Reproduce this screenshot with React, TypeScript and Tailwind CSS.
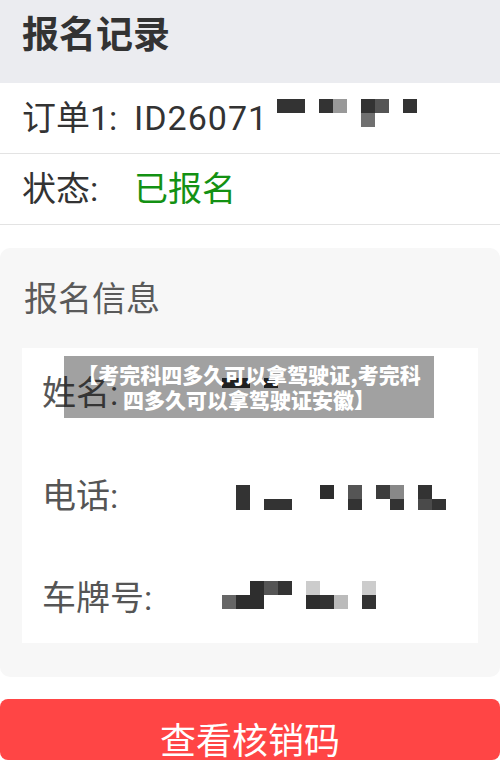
import React from 'react';

// mosaic cells for the blurred values, 14px per column
type MosaicProps = {
  rows: string[][];
  heights: number[];
  className?: string;
};

function Mosaic({ rows, heights, className = '' }: MosaicProps) {
  return (
    <div className={`flex flex-col ${className}`}>
      {rows.map((row, r) => (
        <div key={r} className="flex">
          {row.map((c, i) => (
            <div
              key={i}
              className="w-[14px] shrink-0"
              style={{ height: heights[r], backgroundColor: c || 'transparent' }}
            />
          ))}
        </div>
      ))}
    </div>
  );
}

const orderCells = [
  ['#333', '#333', '', '#333', '#999', '', '#333', '#555', '', '#333'],
  ['', '', '', '', '', '', '#707070', '', '', ''],
];

const nameCells = [['#333', '#333', '', '#333']];

const phoneCells = [
  ['', '#333', '', '', '', '', '', '#2e2e2e', '', '#555', '', '#3c3c3c', '#888', '', '#333', ''],
  ['', '#333', '', '#333', '#333', '', '', '', '', '#333', '', '', '#333', '', '#4a4a4a', '#333'],
];

const plateCells = [
  ['', '', '#2e2e2e', '#555', '#333', '', '#ccc', '', '', '', '#ccc'],
  ['#666', '#2e2e2e', '#2e2e2e', '', '', '', '#2e2e2e', '#333', '#bbb', '', '#333'],
];

export default function App() {
  return (
    <div className="relative w-[500px] h-[775px] bg-white overflow-hidden font-['Roboto','Noto_Sans_CJK_SC','Noto_Sans',sans-serif]">
      {/* header */}
      <div className="h-[83px] bg-[#ebecf0] flex items-center px-[22px]">
        <h1 className="text-[37px] leading-[44px] font-bold text-[#333] -mt-[12px]">报名记录</h1>
      </div>

      {/* order rows */}
      <div className="h-[71px] border-b border-[#e3e3e3] flex px-[22px]">
        <span className="w-[112px] shrink-0 text-[34px] leading-[70px] text-[#333]">订单1:</span>
        <span className="text-[34px] leading-[70px] tracking-[1px] text-[#333]">ID26071</span>
        <Mosaic rows={orderCells} heights={[14, 14]} className="mt-[16px] ml-[9px]" />
      </div>
      <div className="h-[71px] border-b border-[#e3e3e3] flex px-[22px]">
        <span className="w-[112px] shrink-0 text-[34px] leading-[70px] text-[#333]">状态:</span>
        <span className="text-[34px] leading-[70px] text-[#139113]">已报名</span>
      </div>

      {/* info card */}
      <div className="mt-[23px] bg-[#f7f7f7] rounded-[10px] px-[22px] pt-[31px] pb-[34px]">
        <h2 className="pl-[2px] text-[34px] leading-[40px] text-[#5a5a5a]">报名信息</h2>
        <div className="mt-[29px] bg-white px-[20px] pt-[20px] pb-[20px] flex flex-col gap-[52.5px]">
          <div className="h-[50px] flex">
            <span className="w-[180px] shrink-0 text-[34px] leading-[50px] text-[#555]">姓名:</span>
            <Mosaic rows={nameCells} heights={[10]} className="mt-[10px]" />
          </div>
          <div className="h-[50px] flex">
            <span className="w-[180px] shrink-0 text-[34px] leading-[50px] text-[#555]">电话:</span>
            <Mosaic rows={phoneCells} heights={[14, 11]} className="mt-[14.5px]" />
          </div>
          <div className="h-[50px] flex">
            <span className="w-[180px] shrink-0 text-[34px] leading-[50px] text-[#555]">车牌号:</span>
            <Mosaic rows={plateCells} heights={[14, 14]} className="mt-[8px]" />
          </div>
        </div>
      </div>

      {/* button */}
      <button className="mt-[22px] w-full h-[61px] rounded-[8px] bg-[#ff4545] flex justify-center pt-[19px]">
        <span className="text-[36px] leading-[40px] text-white font-['Noto_Sans_CJK_SC',sans-serif]">查看核销码</span>
      </button>

      {/* watermark caption over the content */}
      <div className="absolute left-[64px] top-[356px] w-[370px] h-[62px] bg-black/[0.37] flex flex-col items-center justify-center">
        <p className="text-white text-[21px] leading-[25px] font-black text-center font-['Noto_Sans_CJK_SC',sans-serif]">
          【考完科四多久可以拿驾驶证,考完科
          <br />
          四多久可以拿驾驶证安徽】
        </p>
      </div>
    </div>
  );
}
